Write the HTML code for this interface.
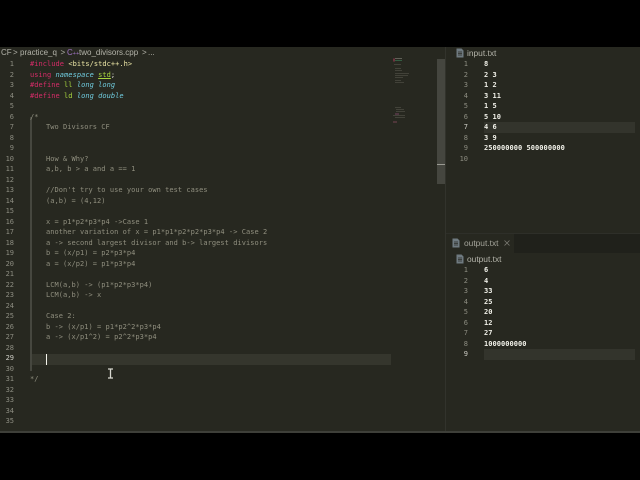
<!DOCTYPE html>
<html>
<head>
<meta charset="utf-8">
<style>
html,body{margin:0;padding:0;background:#000;}
#root{position:relative;width:640px;height:480px;overflow:hidden;background:#000;font-family:"DejaVu Sans Mono",monospace;}
#app{position:absolute;left:0;top:47px;width:640px;height:384px;background:#272820;overflow:hidden;filter:blur(.3px);}
.abs{position:absolute;}
.l{position:absolute;white-space:pre;font-size:7px;letter-spacing:.04px;line-height:10.5px;height:10.5px;color:#8a8a78;}
.n{position:absolute;width:14px;text-align:right;font-size:7px;line-height:10.5px;color:#8c8c80;}
.c{color:#908f7f;}
.k{color:#d62c68;}.g{color:#a8d53e;}.t{color:#70ccdf;font-style:italic;}.w{color:#e8e8df;}.y{color:#ece6a6;}
.o{color:#f0f0e8;font-weight:bold;}
.ui{font-family:"Liberation Sans",sans-serif;font-size:8px;color:#b4b4aa;white-space:pre;position:absolute;line-height:10px;}
</style>
</head>
<body>
<div id="root">
<div id="app">
  <!-- breadcrumb -->
  <div class="ui" style="left:1px;top:0.5px;">CF</div>
  <div class="ui" style="left:13px;top:0.5px;">&gt;</div>
  <div class="ui" style="left:20px;top:0.5px;">practice_q</div>
  <div class="ui" style="left:60.5px;top:0.5px;">&gt;</div>
  <div class="ui" style="left:67px;top:0.5px;color:#a074c4;">C<span style="font-size:5.5px;">++</span></div>
  <div class="ui" style="left:79px;top:0.5px;">two_divisors.cpp</div>
  <div class="ui" style="left:142px;top:0.5px;">&gt;</div>
  <div class="ui" style="left:148px;top:0.5px;">...</div>

  <!-- line highlight main -->
  <div class="abs" style="left:30px;top:307px;width:361px;height:10.5px;background:#35362d;"></div>
  <div class="abs" style="left:30px;top:70px;width:1.5px;height:254px;background:#46473f;"></div>
  <div class="abs" style="left:46px;top:306.5px;width:1.4px;height:11px;background:#f4f4ec;"></div>

  <!-- numbers -->
  <div class="n" style="left:0;top:12px;">1</div><div class="n" style="left:0;top:22.5px;">2</div><div class="n" style="left:0;top:33px;">3</div><div class="n" style="left:0;top:43.5px;">4</div><div class="n" style="left:0;top:54px;">5</div><div class="n" style="left:0;top:64.5px;">6</div><div class="n" style="left:0;top:75px;">7</div><div class="n" style="left:0;top:85.5px;">8</div><div class="n" style="left:0;top:96px;">9</div><div class="n" style="left:0;top:106.5px;">10</div><div class="n" style="left:0;top:117px;">11</div><div class="n" style="left:0;top:127.5px;">12</div><div class="n" style="left:0;top:138px;">13</div><div class="n" style="left:0;top:148.5px;">14</div><div class="n" style="left:0;top:159px;">15</div><div class="n" style="left:0;top:169.5px;">16</div><div class="n" style="left:0;top:180px;">17</div><div class="n" style="left:0;top:190.5px;">18</div><div class="n" style="left:0;top:201px;">19</div><div class="n" style="left:0;top:211.5px;">20</div><div class="n" style="left:0;top:222px;">21</div><div class="n" style="left:0;top:232.5px;">22</div><div class="n" style="left:0;top:243px;">23</div><div class="n" style="left:0;top:253.5px;">24</div><div class="n" style="left:0;top:264px;">25</div><div class="n" style="left:0;top:274.5px;">26</div><div class="n" style="left:0;top:285px;">27</div><div class="n" style="left:0;top:295.5px;">28</div><div class="n" style="left:0;top:306px;color:#d0d0c8;">29</div><div class="n" style="left:0;top:316.5px;">30</div><div class="n" style="left:0;top:327px;">31</div><div class="n" style="left:0;top:337.5px;">32</div><div class="n" style="left:0;top:348px;">33</div><div class="n" style="left:0;top:358.5px;">34</div><div class="n" style="left:0;top:369px;">35</div>

  <!-- code -->
  <div class="l" style="left:30px;top:12px;"><span class="k">#include</span> <span class="y">&lt;bits/stdc++.h&gt;</span></div>
  <div class="l" style="left:30px;top:22.5px;"><span class="k">using</span> <span class="t">namespace</span> <span class="g" style="text-decoration:underline;">std</span><span class="w">;</span></div>
  <div class="l" style="left:30px;top:33px;"><span class="k">#define</span> <span class="g">ll</span> <span class="t">long long</span></div>
  <div class="l" style="left:30px;top:43.5px;"><span class="k">#define</span> <span class="g">ld</span> <span class="t">long double</span></div>
  <div class="l c" style="left:30px;top:64.5px;">/*</div>
  <div class="l c" style="left:46px;top:75px;">Two Divisors CF</div>
  <div class="l c" style="left:46px;top:106.5px;">How &amp; Why?</div>
  <div class="l c" style="left:46px;top:117px;">a,b, b &gt; a and a == 1</div>
  <div class="l c" style="left:46px;top:138px;">//Don't try to use your own test cases</div>
  <div class="l c" style="left:46px;top:148.5px;">(a,b) = (4,12)</div>
  <div class="l c" style="left:46px;top:169.5px;">x = p1*p2*p3*p4 -&gt;Case 1</div>
  <div class="l c" style="left:46px;top:180px;">another variation of x = p1*p1*p2*p2*p3*p4 -&gt; Case 2</div>
  <div class="l c" style="left:46px;top:190.5px;">a -&gt; second largest divisor and b-&gt; largest divisors</div>
  <div class="l c" style="left:46px;top:201px;">b = (x/p1) = p2*p3*p4</div>
  <div class="l c" style="left:46px;top:211.5px;">a = (x/p2) = p1*p3*p4</div>
  <div class="l c" style="left:46px;top:232.5px;">LCM(a,b) -&gt; (p1*p2*p3*p4)</div>
  <div class="l c" style="left:46px;top:243px;">LCM(a,b) -&gt; x</div>
  <div class="l c" style="left:46px;top:264px;">Case 2:</div>
  <div class="l c" style="left:46px;top:274.5px;">b -&gt; (x/p1) = p1*p2^2*p3*p4</div>
  <div class="l c" style="left:46px;top:285px;">a -&gt; (x/p1^2) = p2^2*p3*p4</div>
  <div class="l c" style="left:30px;top:327px;">*/</div>

  <!-- I-beam cursor -->
  <svg class="abs" style="left:107px;top:321px;" width="7" height="11" viewBox="0 0 7 11"><path d="M1 1h5M1 10h5M3.5 1v9" stroke="#d8d8d0" stroke-width="1.3" fill="none"/></svg>

  <!-- minimap -->
  <svg class="abs" style="left:392px;top:10px;" width="30" height="70" viewBox="0 0 30 70">
    <rect x="1" y="1.5" width="2" height="3" fill="#a03a55" opacity=".6"/><rect x="3" y="1" width="7" height="1" fill="#a8a8a0" opacity=".45"/><rect x="3" y="3" width="7" height="1" fill="#3f8a60" opacity=".55"/>
    <g fill="#6b6b60" opacity=".4"><rect x="2" y="7" width="7" height="1"/><rect x="3" y="11" width="6" height="1"/><rect x="3" y="13" width="7" height="1"/><rect x="3" y="16" width="14" height="1"/><rect x="3" y="18" width="13" height="1"/><rect x="3" y="20" width="8" height="1"/><rect x="3" y="23" width="6" height="1"/><rect x="3" y="25" width="9" height="1"/>
    <rect x="3" y="50" width="6" height="1"/><rect x="4" y="52" width="8" height="1"/><rect x="4" y="54" width="9" height="1"/><rect x="1" y="58" width="12" height="1"/><rect x="3" y="60" width="10" height="1"/></g>
    <rect x="3" y="56" width="4" height="2" fill="#8a4a70" opacity=".4"/><rect x="1" y="64" width="4" height="2" fill="#8a4a60" opacity=".4"/>
  </svg>

  <!-- scrollbar -->
  <div class="abs" style="left:437px;top:12px;width:8px;height:125px;background:#45463f;"></div>
  <div class="abs" style="left:437px;top:116.5px;width:8px;height:1px;background:#9a9a92;"></div>
  <div class="abs" style="left:445px;top:0;width:1px;height:384px;background:#32332c;"></div>

  <!-- input panel -->
  <svg class="abs" style="left:456px;top:1px;" width="8" height="10" viewBox="0 0 8 10"><path d="M.5.5h5l2 2v7h-7z" fill="#6f7a80"/><path d="M2 4h4M2 5.5h4M2 7h4" stroke="#2b2c26" stroke-width=".7"/></svg>
  <div class="ui" style="left:467px;top:1px;font-size:8.4px;">input.txt</div>
  <div class="abs" style="left:484px;top:75px;width:151px;height:10.5px;background:#33342c;"></div>
  <div class="n" style="left:454px;top:12px;">1</div><div class="n" style="left:454px;top:22.5px;">2</div><div class="n" style="left:454px;top:33px;">3</div><div class="n" style="left:454px;top:43.5px;">4</div><div class="n" style="left:454px;top:54px;">5</div><div class="n" style="left:454px;top:64.5px;">6</div><div class="n" style="left:454px;top:75px;color:#d0d0c8;">7</div><div class="n" style="left:454px;top:85.5px;">8</div><div class="n" style="left:454px;top:96px;">9</div><div class="n" style="left:454px;top:106.5px;">10</div>
  <div class="l o" style="left:484px;top:12px;">8</div>
  <div class="l o" style="left:484px;top:22.5px;">2 3</div>
  <div class="l o" style="left:484px;top:33px;">1 2</div>
  <div class="l o" style="left:484px;top:43.5px;">3 11</div>
  <div class="l o" style="left:484px;top:54px;">1 5</div>
  <div class="l o" style="left:484px;top:64.5px;">5 10</div>
  <div class="l o" style="left:484px;top:75px;">4 6</div>
  <div class="l o" style="left:484px;top:85.5px;">3 9</div>
  <div class="l o" style="left:484px;top:96px;">250000000 500000000</div>

  <!-- output tab bar -->
  <div class="abs" style="left:446px;top:186px;width:194px;height:1px;background:#2e2f29;"></div>
  <div class="abs" style="left:514px;top:187px;width:126px;height:19px;background:#20211b;"></div>
  <svg class="abs" style="left:452px;top:191px;" width="8" height="10" viewBox="0 0 8 10"><path d="M.5.5h5l2 2v7h-7z" fill="#6f7a80"/><path d="M2 4h4M2 5.5h4M2 7h4" stroke="#2b2c26" stroke-width=".7"/></svg>
  <div class="ui" style="left:464px;top:191px;font-size:8.4px;color:#a4a49a;">output.txt</div>
  <svg class="abs" style="left:503px;top:192px;" width="8" height="8" viewBox="0 0 8 8"><path d="M1.5 1.5l5 5M6.5 1.5l-5 5" stroke="#7c7c74" stroke-width=".8"/></svg>

  <!-- output panel -->
  <svg class="abs" style="left:456px;top:207px;" width="8" height="10" viewBox="0 0 8 10"><path d="M.5.5h5l2 2v7h-7z" fill="#6f7a80"/><path d="M2 4h4M2 5.5h4M2 7h4" stroke="#2b2c26" stroke-width=".7"/></svg>
  <div class="ui" style="left:467px;top:207px;font-size:8.4px;">output.txt</div>
  <div class="abs" style="left:484px;top:302px;width:151px;height:10.5px;background:#33342c;"></div>
  <div class="n" style="left:454px;top:218px;">1</div><div class="n" style="left:454px;top:228.5px;">2</div><div class="n" style="left:454px;top:239px;">3</div><div class="n" style="left:454px;top:249.5px;">4</div><div class="n" style="left:454px;top:260px;">5</div><div class="n" style="left:454px;top:270.5px;">6</div><div class="n" style="left:454px;top:281px;">7</div><div class="n" style="left:454px;top:291.5px;">8</div><div class="n" style="left:454px;top:302px;color:#d0d0c8;">9</div>
  <div class="l o" style="left:484px;top:218px;">6</div>
  <div class="l o" style="left:484px;top:228.5px;">4</div>
  <div class="l o" style="left:484px;top:239px;">33</div>
  <div class="l o" style="left:484px;top:249.5px;">25</div>
  <div class="l o" style="left:484px;top:260px;">20</div>
  <div class="l o" style="left:484px;top:270.5px;">12</div>
  <div class="l o" style="left:484px;top:281px;">27</div>
  <div class="l o" style="left:484px;top:291.5px;">1000000000</div>
</div>
<div class="abs" style="left:0;top:431px;width:640px;height:2px;background:#3e3f39;"></div>
</div>
</body>
</html>
